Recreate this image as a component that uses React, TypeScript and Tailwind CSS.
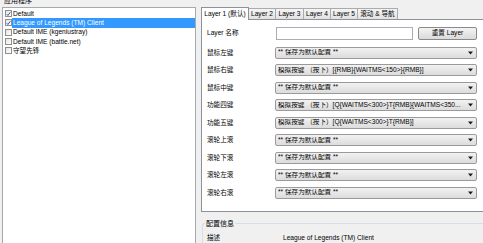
import React from "react";

const FONT = { fontFamily: '"Liberation Sans", "Noto Sans CJK SC", sans-serif' };

function Check({ checked }: { checked: boolean }) {
  return (
    <div className="w-[7px] h-[7px] border border-[#8f8f8f] bg-gradient-to-br from-[#e4e4e4] to-[#ffffff] flex items-center justify-center shrink-0">
      {checked && (
        <svg width="6" height="6" viewBox="0 0 6 6">
          <path d="M0.8 3.2 L2.3 4.8 L5.3 0.8" stroke="#2c4fa8" strokeWidth="1.1" fill="none" />
        </svg>
      )}
    </div>
  );
}

function Select({ text }: { text: string }) {
  return (
    <div className="w-[202px] h-[12px] border border-[#9a9a9a] rounded-[2px] bg-gradient-to-b from-[#f2f2f2] to-[#dcdcdc] flex items-center pl-[2px] pr-[3px]">
      <span className="flex-1 whitespace-nowrap overflow-hidden leading-none">{text}</span>
      <svg width="5" height="4" viewBox="0 0 5 4" className="shrink-0">
        <path d="M0 0.5 H5 L2.5 3.5 Z" fill="#1a1a1a" />
      </svg>
    </div>
  );
}

const rows: [string, string][] = [
  ["鼠标左键", "** 保存为默认配置 **"],
  ["鼠标右键", "模拟按键 （按下）[{RMB}{WAITMS<150>}{RMB}]"],
  ["鼠标中键", "** 保存为默认配置 **"],
  ["功能四键", "模拟按键 （按下）[Q{WAITMS<300>}T{RMB}{WAITMS<350..."],
  ["功能五键", "模拟按键 （按下）[Q{WAITMS<300>}T{RMB}]"],
  ["滚轮上滚", "** 保存为默认配置 **"],
  ["滚轮下滚", "** 保存为默认配置 **"],
  ["滚轮左滚", "** 保存为默认配置 **"],
  ["滚轮右滚", "** 保存为默认配置 **"],
];

const apps: [string, boolean, boolean][] = [
  ["Default", true, false],
  ["League of Legends (TM) Client", true, true],
  ["Default IME (kgeniustray)", false, false],
  ["Default IME (battle.net)", false, false],
  ["守望先锋", false, false],
];

const tabs: [string, string][] = [
  ["Layer 2", "w-[28px]"],
  ["Layer 3", "w-[29px]"],
  ["Layer 4", "w-[28px]"],
  ["Layer 5", "w-[28px]"],
  ["滚动 & 导航", "w-[41px]"],
];

export default function App() {
  return (
    <div
      style={FONT}
      className="w-[483px] h-[243px] overflow-hidden bg-[#f0f0f0] text-[6.6px] text-black flex"
    >
      {/* Left column */}
      <div className="w-[196px] shrink-0 pl-[2px] flex flex-col">
        <div className="h-[7px] relative">
          <div className="absolute left-[2px] top-[-3px] text-[7px] leading-[8px]">应用程序</div>
        </div>
        <div className="flex-1 bg-white border border-[#a5a9b0] border-b-0 flex flex-col pt-[1px]">
          {apps.map(([name, checked, sel]) => (
            <div key={name} className="h-[9.3px] flex items-center">
              <div className="w-[9px] flex justify-center pl-[1px]">
                <Check checked={checked} />
              </div>
              <div
                className={
                  "flex-1 h-full flex items-center pl-[1px] whitespace-nowrap " +
                  (sel ? "bg-[#3399ff] text-white" : "")
                }
              >
                {name}
              </div>
            </div>
          ))}
        </div>
      </div>

      {/* Right column */}
      <div className="flex-1 flex flex-col pl-[5px]">
        {/* Tabs */}
        <div className="flex items-end h-[19px] pt-[6px]">
          <div className="w-[48px] h-[13px] bg-white border border-b-0 border-[#8e9199] flex items-center justify-center whitespace-nowrap relative top-[1px] z-10">
            Layer 1 (默认)
          </div>
          {tabs.map(([t, w]) => (
            <div
              key={t}
              className={
                w +
                " h-[11px] -ml-px bg-gradient-to-b from-[#f4f4f4] to-[#e2e2e2] border border-b-0 border-[#a9abb0] flex items-center justify-center whitespace-nowrap"
              }
            >
              {t}
            </div>
          ))}
        </div>
        {/* Pane */}
        <div className="h-[198px] bg-white border border-r-0 border-[#8e9199] pl-[5px] flex flex-col">
          <div className="mt-[6px] h-[14px] flex items-center">
            <div className="w-[69px] shrink-0">Layer 名称</div>
            <div className="w-[137px] h-[13px] bg-white border border-[#abadb3]" />
            <div className="ml-[5px] w-[59px] h-[13px] border border-[#8a8a8a] rounded-[2px] bg-gradient-to-b from-[#f4f4f4] to-[#dadada] flex items-center justify-center">
              重置 Layer
            </div>
          </div>
          <div className="mt-[4px] flex flex-col">
            {rows.map(([label, val], i) => (
              <div key={i} className="h-[17.5px] flex items-center">
                <div className="w-[68px] shrink-0">{label}</div>
                <Select text={val} />
              </div>
            ))}
          </div>
        </div>
        {/* Group box */}
        <div className="mt-[11px] flex-1 border border-r-0 border-b-0 border-[#d5dfe5] rounded-tl-[3px] relative ml-[1px]">
          <div className="absolute left-[2px] top-[-4px] bg-[#f0f0f0] px-[1px] text-[7px] leading-[8px]">配置信息</div>
          <div className="flex items-center mt-[9px] pl-[4px]">
            <div className="w-[76px]">描述</div>
            <div className="whitespace-nowrap">League of Legends (TM) Client</div>
          </div>
        </div>
      </div>
    </div>
  );
}
